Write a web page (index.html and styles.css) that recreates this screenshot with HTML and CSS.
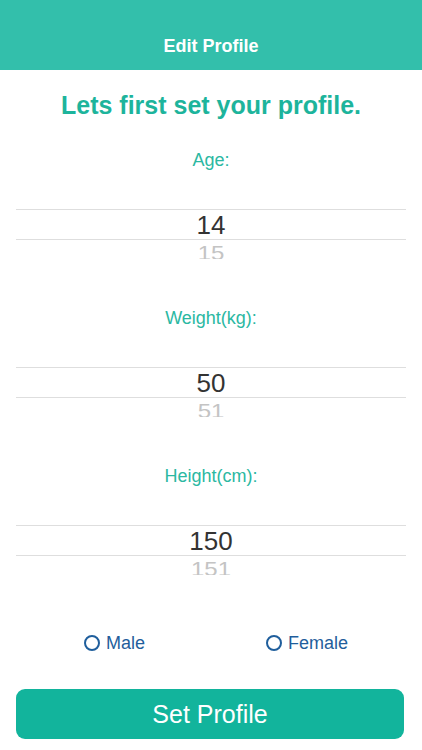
FILE: index.html
```html
<!DOCTYPE html>
<html>
<head>
<meta charset="UTF-8">
<title>Edit Profile</title>
<link rel="stylesheet" href="styles.css">
</head>
<body>
<div class="navbar">Edit Profile</div>
<h1 class="otsikko">Lets first set your profile.</h1>

<div class="osio">
	<div class="nimi">Age:</div>
	<div class="valitsin">
		<div class="valittu">14</div>
		<div class="seuraava">15</div>
	</div>
</div>

<div class="osio">
	<div class="nimi">Weight(kg):</div>
	<div class="valitsin">
		<div class="valittu">50</div>
		<div class="seuraava">51</div>
	</div>
</div>

<div class="osio">
	<div class="nimi">Height(cm):</div>
	<div class="valitsin">
		<div class="valittu">150</div>
		<div class="seuraava">151</div>
	</div>
</div>

<div class="sukupuoli">
	<label class="radio"><span class="ympyra"></span>Male</label>
	<label class="radio"><span class="ympyra"></span>Female</label>
</div>

<button class="nappi">Set Profile</button>
</body>
</html>
```

FILE: styles.css
```css
body {
	margin: 0;
	width: 422px;
	height: 750px;
	background: #fff;
	font-family: "Liberation Sans", Arial, sans-serif;
	overflow: hidden;
}

.navbar {
	height: 50px;
	padding-top: 20px;
	line-height: 52px;
	background-color: #33bfab;
	color: #fff;
	font-size: 18px;
	font-weight: bold;
	text-align: center;
}

.otsikko {
	margin: 18px 0 0 0;
	line-height: 34px;
	font-size: 25px;
	font-weight: bold;
	color: #1db49c;
	text-align: center;
}

.osio {
	margin-top: 28px;
}
.osio + .osio {
	margin-top: 49px;
}

.nimi {
	line-height: 20px;
	font-size: 18px;
	color: #2bb8a2;
	text-align: center;
}

.valitsin {
	margin: 39px 16px 0 16px;
	height: 50px;
	overflow: hidden;
}

.valittu {
	height: 29px;
	line-height: 31px;
	border-top: 1px solid #dedede;
	border-bottom: 1px solid #dedede;
	font-size: 26px;
	color: #333;
	text-align: center;
}

.seuraava {
	line-height: 30px;
	font-size: 24px;
	color: #c4c4c4;
	text-align: center;
	transform: scaleY(0.85);
	transform-origin: top;
}

.sukupuoli {
	display: flex;
	gap: 121px;
	margin-top: 58px;
	padding-left: 84px;
	line-height: 20px;
}

.radio {
	display: flex;
	align-items: center;
	gap: 6px;
	font-size: 18px;
	color: #1f5e9c;
}

.ympyra {
	width: 12px;
	height: 12px;
	border: 2px solid #1f5e9c;
	border-radius: 50%;
}

.nappi {
	display: block;
	width: 388px;
	height: 50px;
	margin: 36px 16px 0 16px;
	border: none;
	border-radius: 9px;
	background-color: #12b49c;
	color: #fff;
	font-family: "Liberation Sans", Arial, sans-serif;
	font-size: 25px;
	cursor: pointer;
}
```
